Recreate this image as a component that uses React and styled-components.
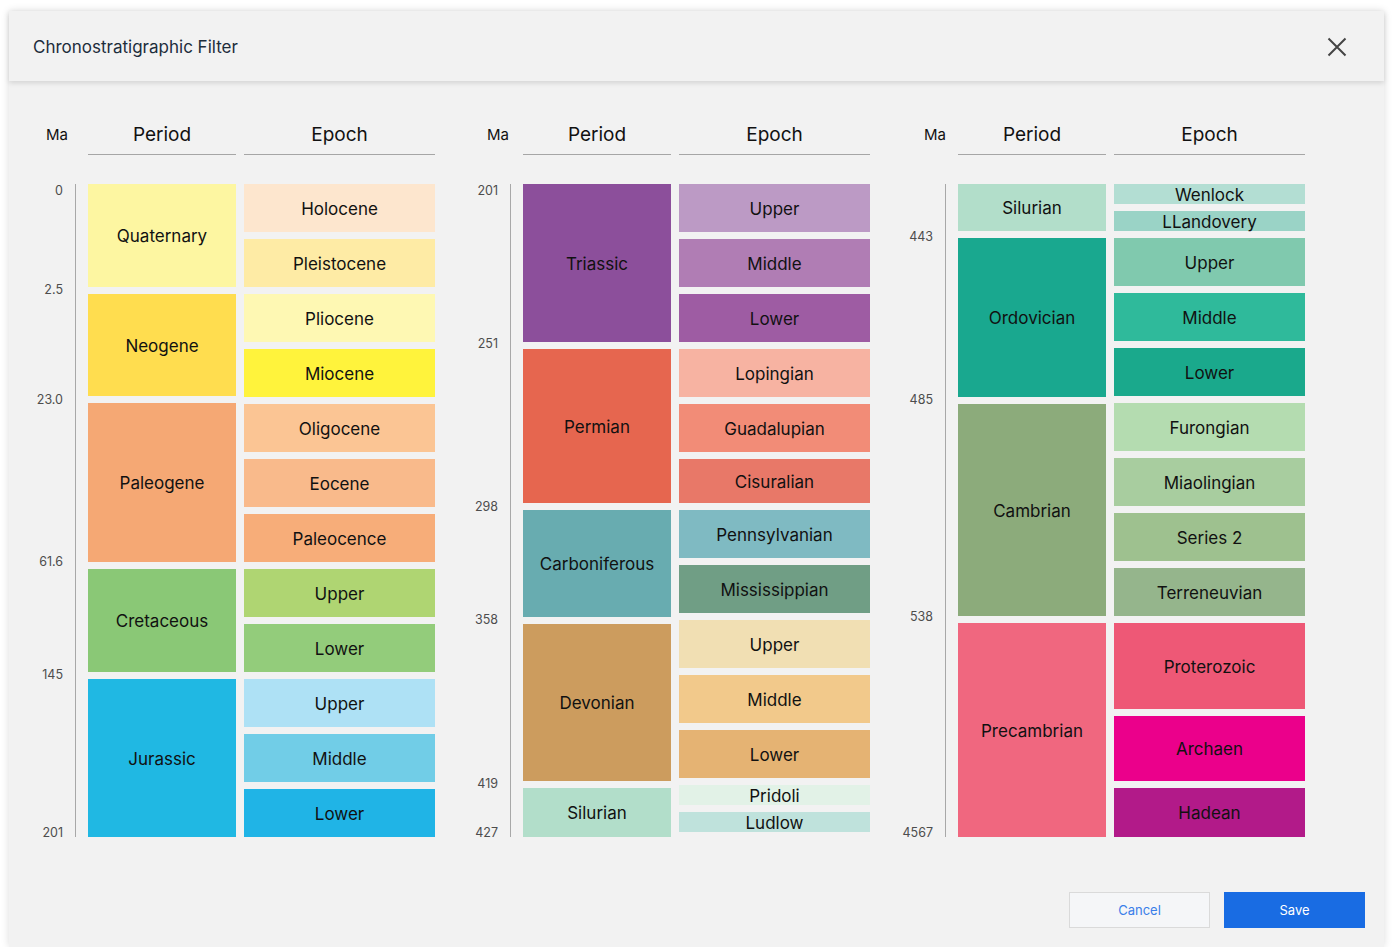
import React from 'react';
import styled, { createGlobalStyle } from 'styled-components';

const GlobalStyle = createGlobalStyle`
  body {
    margin: 0;
    background: #ffffff;
    font-family: Inter, 'Noto Sans', sans-serif;
  }
`;

const Modal = styled.div`
  margin: 11px 0 0 9px;
  width: 1375px;
  height: 936px;
  background: #f2f2f2;
  box-shadow: 0 0 8px rgba(0, 0, 0, 0.14);
  display: flex;
  flex-direction: column;
`;

const Header = styled.div`
  height: 70px;
  flex: none;
  box-sizing: border-box;
  display: flex;
  align-items: center;
  justify-content: space-between;
  padding: 2px 36px 0 24px;
  background: #f2f2f2;
  box-shadow: 0 2px 5px rgba(0, 0, 0, 0.13);
  position: relative;
  z-index: 1;
`;

const Title = styled.h2`
  margin: 0;
  font-size: 17px;
  font-weight: 400;
  color: #1d2d3c;
`;

const CloseButton = styled.button`
  width: 22px;
  height: 22px;
  padding: 0;
  border: none;
  background: transparent;
  display: flex;
  align-items: center;
  justify-content: center;
  cursor: pointer;
`;

const Body = styled.div`
  flex: 1;
  display: flex;
  flex-direction: column;
  padding: 33px 19px 19px 26px;
`;

const Groups = styled.div`
  display: flex;
  gap: 35px;
`;

const Group = styled.div`
  display: grid;
  grid-template-columns: 45px 148px 191px;
  column-gap: 8px;
  row-gap: 29px;
`;

const MaHead = styled.div`
  height: 40px;
  display: flex;
  align-items: center;
  justify-content: flex-end;
  padding-right: ${(p) => p.$pad}px;
  font-size: 15px;
  color: #111;
`;

const ColHead = styled.div`
  height: 40px;
  display: flex;
  align-items: center;
  justify-content: center;
  border-bottom: 1px solid #a6a6a6;
  font-size: 19px;
  color: #111;
`;

const Axis = styled.div`
  position: relative;
  width: 40px;
  height: 653px;
  border-right: 1px solid #a8a8a8;
`;

const Tick = styled.span`
  position: absolute;
  right: 12px;
  transform: translateY(-50%);
  margin-top: 1px;
  font-size: 12.5px;
  line-height: 1;
  color: #4d4d4d;
`;

const Stack = styled.div`
  display: flex;
  flex-direction: column;
  gap: 7px;
`;

const Block = styled.div`
  height: ${(p) => p.$h}px;
  box-sizing: border-box;
  padding-top: 2px;
  background: ${(p) => p.$bg};
  display: flex;
  align-items: center;
  justify-content: center;
  font-size: 17px;
  line-height: 1;
  color: #111;
  white-space: nowrap;
`;

const Footer = styled.div`
  margin-top: auto;
  display: flex;
  justify-content: flex-end;
  gap: 14px;
`;

const Button = styled.button`
  width: 141px;
  height: 36px;
  font-family: Inter, 'Noto Sans', sans-serif;
  font-size: 13px;
  cursor: pointer;
  border: 1px solid ${(p) => (p.$primary ? '#196ce3' : '#dadada')};
  background: ${(p) => (p.$primary ? '#196ce3' : '#f5f6f8')};
  color: ${(p) => (p.$primary ? '#ffffff' : '#3a7ee9')};
`;

const groups = [
  {
    maPad: 12,
    ticks: [
      [6, '0'],
      [105, '2.5'],
      [215, '23.0'],
      [377, '61.6'],
      [490, '145'],
      [648, '201'],
    ],
    periods: [
      ['Quaternary', 103, '#fdf6a1'],
      ['Neogene', 102, '#ffdd4f'],
      ['Paleogene', 159, '#f5a874'],
      ['Cretaceous', 103, '#8ac876'],
      ['Jurassic', 158, '#20b8e3'],
    ],
    epochs: [
      ['Holocene', 48, '#fde6ce'],
      ['Pleistocene', 48, '#feeba5'],
      ['Pliocene', 48, '#fef8b3'],
      ['Miocene', 48, '#fff33c'],
      ['Oligocene', 48, '#fbc594'],
      ['Eocene', 48, '#f9ba8b'],
      ['Paleocence', 48, '#f7ad79'],
      ['Upper', 48, '#afd572'],
      ['Lower', 48, '#93cc7b'],
      ['Upper', 48, '#aee1f5'],
      ['Middle', 48, '#71cde7'],
      ['Lower', 48, '#20b4e6'],
    ],
  },
  {
    maPad: 6,
    ticks: [
      [6, '201'],
      [159, '251'],
      [322, '298'],
      [435, '358'],
      [599, '419'],
      [648, '427'],
    ],
    periods: [
      ['Triassic', 158, '#8c4f9b'],
      ['Permian', 154, '#e6664f'],
      ['Carboniferous', 107, '#68acb0'],
      ['Devonian', 157, '#cc9c5e'],
      ['Silurian', 49, '#b2deca'],
    ],
    epochs: [
      ['Upper', 48, '#bc9ac5'],
      ['Middle', 48, '#b07db4'],
      ['Lower', 48, '#9e5ca3'],
      ['Lopingian', 48, '#f7b3a2'],
      ['Guadalupian', 48, '#f28c77'],
      ['Cisuralian', 44, '#e87868'],
      ['Pennsylvanian', 48, '#7fbac2'],
      ['Mississippian', 48, '#709e85'],
      ['Upper', 48, '#f1dfb3'],
      ['Middle', 48, '#f2c98b'],
      ['Lower', 48, '#e5b373'],
      ['Pridoli', 20, '#e2f2e7'],
      ['Ludlow', 20, '#bfe2dc'],
    ],
  },
  {
    maPad: 4,
    ticks: [
      [52, '443'],
      [215, '485'],
      [432, '538'],
      [648, '4567'],
    ],
    periods: [
      ['Silurian', 47, '#b2deca'],
      ['Ordovician', 159, '#19a88f'],
      ['Cambrian', 212, '#8cab7b'],
      ['Precambrian', 214, '#f0677f'],
    ],
    epochs: [
      ['Wenlock', 20, '#b3ded3'],
      ['LLandovery', 20, '#9ad3c6'],
      ['Upper', 48, '#80c9ae'],
      ['Middle', 48, '#2fba9b'],
      ['Lower', 48, '#1aa98c'],
      ['Furongian', 48, '#b4dcb0'],
      ['Miaolingian', 48, '#a8cd9f'],
      ['Series 2', 48, '#9ec18f'],
      ['Terreneuvian', 48, '#95b58c'],
      ['Proterozoic', 86, '#ee5876'],
      ['Archaen', 65, '#eb008b'],
      ['Hadean', 49, '#b21a89'],
    ],
  },
];

const TimeGroup = ({ group }) => (
  <Group>
    <MaHead $pad={group.maPad}>Ma</MaHead>
    <ColHead>Period</ColHead>
    <ColHead>Epoch</ColHead>
    <Axis>
      {group.ticks.map(([y, label]) => (
        <Tick key={label} style={{ top: y }}>
          {label}
        </Tick>
      ))}
    </Axis>
    <Stack>
      {group.periods.map(([name, h, bg]) => (
        <Block key={name} $h={h} $bg={bg}>
          {name}
        </Block>
      ))}
    </Stack>
    <Stack>
      {group.epochs.map(([name, h, bg], i) => (
        <Block key={i} $h={h} $bg={bg}>
          {name}
        </Block>
      ))}
    </Stack>
  </Group>
);

const App = () => (
  <>
    <GlobalStyle />
    <Modal>
      <Header>
        <Title>Chronostratigraphic Filter</Title>
        <CloseButton aria-label="Close">
          <svg width="20" height="20" viewBox="0 0 20 20">
            <path
              d="M1.5 1.5 L18.5 18.5 M18.5 1.5 L1.5 18.5"
              stroke="#444"
              strokeWidth="2"
              fill="none"
            />
          </svg>
        </CloseButton>
      </Header>
      <Body>
        <Groups>
          {groups.map((g, i) => (
            <TimeGroup key={i} group={g} />
          ))}
        </Groups>
        <Footer>
          <Button>Cancel</Button>
          <Button $primary>Save</Button>
        </Footer>
      </Body>
    </Modal>
  </>
);

export default App;
